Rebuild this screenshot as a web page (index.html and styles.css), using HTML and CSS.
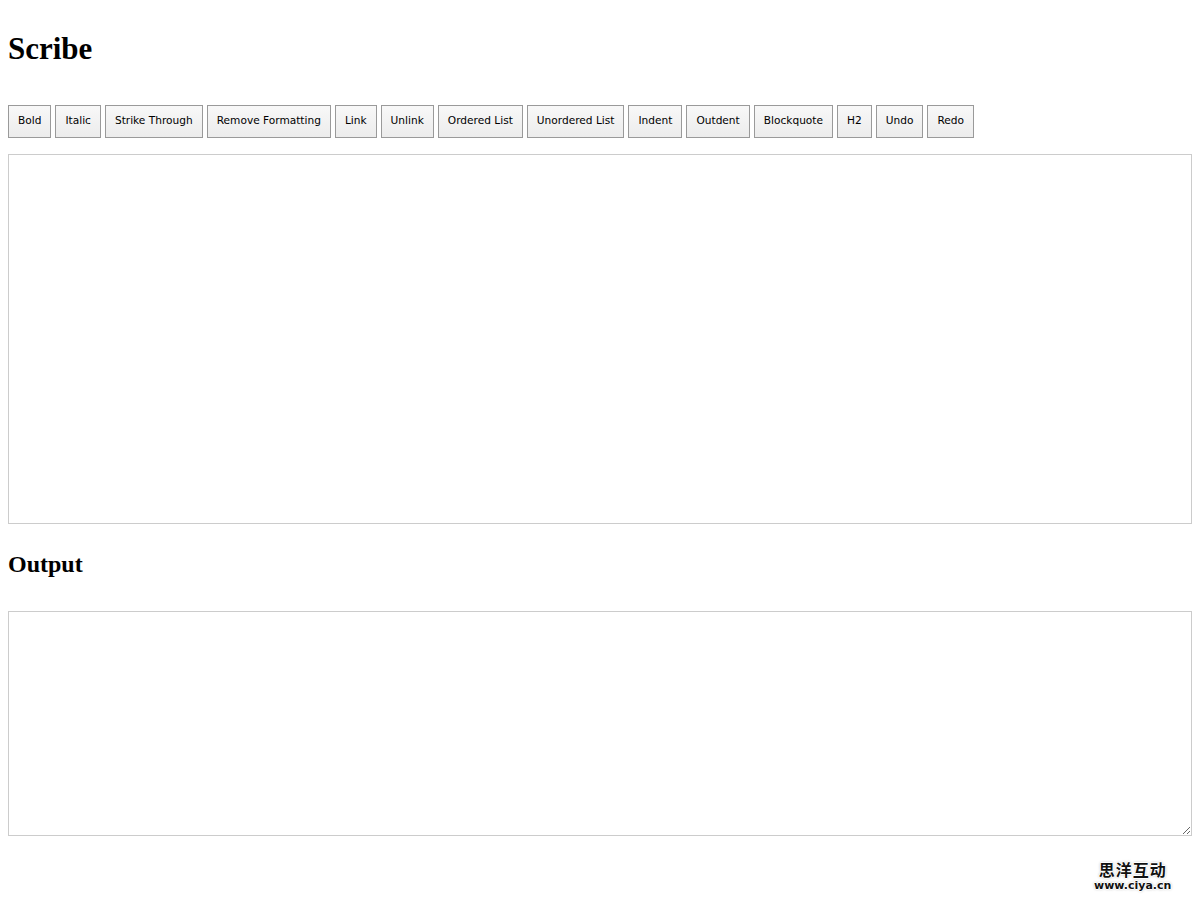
FILE: index.html
```html
<!DOCTYPE html>
<html lang="en">

<head>
    <meta charset="UTF-8">
    <title>Scribe</title>
    <link rel="stylesheet" href="styles.css">
</head>

<body>
    <h1>Scribe</h1>

    <div class="toolbar">
        <button>Bold</button>
        <button>Italic</button>
        <button>Strike Through</button>
        <button>Remove Formatting</button>
        <button>Link</button>
        <button>Unlink</button>
        <button>Ordered List</button>
        <button>Unordered List</button>
        <button>Indent</button>
        <button>Outdent</button>
        <button>Blockquote</button>
        <button>H2</button>
        <button>Undo</button>
        <button>Redo</button>
    </div>

    <div class="scribe" contenteditable="true"></div>

    <h2>Output</h2>

    <textarea class="scribe-html" readonly></textarea>

    <div class="watermark">
        <span class="wm-cn">思洋互动</span>
        <span class="wm-url">www.ciya.cn</span>
    </div>
</body>

</html>
```

FILE: styles.css
```css
body {
    margin: 8px;
    font-family: "Liberation Serif", "DejaVu Serif", serif;
    background-color: #ffffff;
    color: #000;
}

h1 {
    font-size: 31px;
    font-weight: bold;
    margin: 0;
    padding-top: 29px;
    line-height: 24px;
}

h2 {
    font-size: 24px;
    font-weight: bold;
    margin: 0;
    padding-top: 29px;
    line-height: 22px;
}

.toolbar {
    margin-top: 44px;
    display: flex;
    gap: 4px;
}

.toolbar button {
    font-family: "DejaVu Sans", Verdana, sans-serif;
    font-size: 10.6px;
    height: 33px;
    padding: 0 9px 3px;
    color: #000;
    border: 1px solid #9a9a9a;
    border-radius: 0;
    background: linear-gradient(#f8f8f8, #ececec);
}

.scribe {
    margin-top: 16px;
    height: 368px;
    border: 1px solid #cccccc;
    outline: none;
}

.scribe-html {
    display: block;
    margin-top: 36px;
    width: 100%;
    height: 225px;
    box-sizing: border-box;
    border: 1px solid #cccccc;
    resize: both;
    outline: none;
}

.watermark {
    position: absolute;
    left: 1094px;
    top: 860px;
    display: flex;
    flex-direction: column;
    align-items: center;
    gap: 2px;
    font-weight: bold;
    color: #111;
    text-shadow: 1px 0 #fff, -1px 0 #fff, 0 1px #fff, 0 -1px #fff, 0 0 3px #888;
}

.wm-cn {
    font-family: "Noto Sans CJK SC", sans-serif;
    font-size: 16px;
    letter-spacing: 1px;
    line-height: 18px;
}

.wm-url {
    font-family: "DejaVu Sans", sans-serif;
    font-size: 11px;
    line-height: 11px;
}
```
